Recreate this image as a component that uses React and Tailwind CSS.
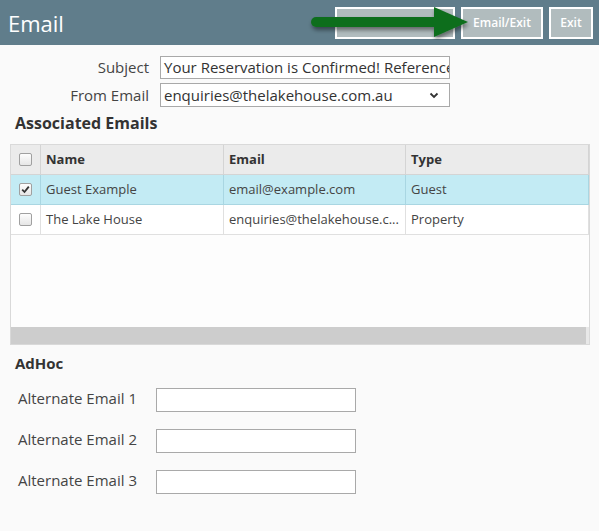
import React from "react";

function Check({ checked }) {
  return (
    <div className="w-[13px] h-[13px] rounded-[2px] border border-[#a0a0a0] bg-[linear-gradient(#fdfdfd,#e6e6e6)] flex items-center justify-center">
      {checked && (
        <svg width="9" height="9" viewBox="0 0 9 9">
          <path d="M1.2 4.6 L3.5 7 L7.8 1.6" fill="none" stroke="#333" strokeWidth="1.8" />
        </svg>
      )}
    </div>
  );
}

export default function App() {
  const font = { fontFamily: '"Open Sans", "DejaVu Sans", sans-serif' };
  return (
    <div className="w-[599px] h-[531px] bg-[#fafafa] overflow-hidden text-[13px] text-[#333]" style={font}>
      <div className="h-[45px] bg-[#607d8b] flex items-center justify-between pl-[8px] pr-[6px] relative">
        <div className="text-white text-[22px] leading-none">Email</div>
        <div className="flex items-center gap-[6px]">
          <div className="w-[120px] h-[32px] border-2 border-white bg-[#b1bcbe] text-white font-semibold text-[12px] flex items-center justify-center">Email/Save</div>
          <div className="w-[82px] h-[32px] border-2 border-white bg-[#b1bcbe] text-white font-semibold text-[12px] flex items-center justify-center">Email/Exit</div>
          <div className="w-[44px] h-[32px] border-2 border-white bg-[#b1bcbe] text-white font-semibold text-[12px] flex items-center justify-center">Exit</div>
        </div>
        <svg className="absolute left-[306px] top-[4px]" width="170" height="36" viewBox="0 0 170 36">
          <defs>
            <filter id="sh" x="-10%" y="-50%" width="120%" height="200%">
              <feDropShadow dx="1" dy="3" stdDeviation="2" floodColor="#000" floodOpacity="0.45" />
            </filter>
          </defs>
          <g filter="url(#sh)">
            <line x1="10" y1="18" x2="130" y2="18" stroke="#0f6e1e" strokeWidth="10" strokeLinecap="round" />
            <polygon points="128,3 162,18 128,33" fill="#0f6e1e" />
          </g>
        </svg>
      </div>

      <div className="pt-[11px] flex flex-col gap-[4px]">
        <div className="flex items-center">
          <div className="w-[149px] text-right text-[15px] text-[#444]">Subject</div>
          <div className="ml-[11px] w-[290px] h-[23px] border border-[#a9a9a9] bg-white px-[3px] text-[15px] leading-[21px] whitespace-nowrap overflow-hidden text-[#333]">Your Reservation is Confirmed! Reference</div>
        </div>
        <div className="flex items-center">
          <div className="w-[149px] text-right text-[15px] text-[#444]">From Email</div>
          <div className="ml-[11px] w-[290px] h-[24px] border border-[#a9a9a9] bg-white pl-[3px] pr-[10px] text-[15px] flex items-center justify-between">
            <span>enquiries@thelakehouse.com.au</span>
            <svg width="10" height="7" viewBox="0 0 10 7"><path d="M1.5 1.5 L5 5 L8.5 1.5" fill="none" stroke="#333" strokeWidth="1.8" /></svg>
          </div>
        </div>
      </div>

      <div className="pl-[15px] pt-[5px] font-bold text-[16px] leading-[22px] text-[#333]">Associated Emails</div>

      <div className="mt-[10px] mx-[10px] w-[580px] h-[201px] border border-[#d9d9d9] bg-[#fdfdfd] flex flex-col">
        <div className="flex h-[30px] bg-[#ebebeb] border-b border-[#d4d4d4] font-bold text-[13px]">
          <div className="w-[30px] flex items-center justify-center border-r border-[#d4d4d4]"><Check /></div>
          <div className="w-[183px] pl-[5px] flex items-center border-r border-[#d4d4d4]">Name</div>
          <div className="w-[182px] pl-[5px] flex items-center border-r border-[#d4d4d4]">Email</div>
          <div className="w-[183px] pl-[5px] flex items-center border-r border-[#d4d4d4]">Type</div>
        </div>
        <div className="flex h-[30px] bg-[#c3ebf4] border-b border-[#a9d6e2] text-[#444]">
          <div className="w-[30px] flex items-center justify-center border-r border-[#a9d6e2]"><Check checked /></div>
          <div className="w-[183px] pl-[5px] flex items-center border-r border-[#a9d6e2]">Guest Example</div>
          <div className="w-[182px] pl-[5px] flex items-center border-r border-[#a9d6e2]">email@example.com</div>
          <div className="w-[183px] pl-[5px] flex items-center border-r border-[#a9d6e2]">Guest</div>
        </div>
        <div className="flex h-[30px] bg-white border-b border-[#e0e0e0] text-[#444]">
          <div className="w-[30px] flex items-center justify-center border-r border-[#e0e0e0]"><Check /></div>
          <div className="w-[183px] pl-[5px] flex items-center border-r border-[#e0e0e0]">The Lake House</div>
          <div className="w-[182px] pl-[5px] flex items-center border-r border-[#e0e0e0] whitespace-nowrap">enquiries@thelakehouse.c...</div>
          <div className="w-[183px] pl-[5px] flex items-center border-r border-[#e0e0e0]">Property</div>
        </div>
        <div className="flex-1" />
        <div className="h-[17px] flex">
          <div className="flex-1 bg-[#cdcdcd]" />
          <div className="w-[3px] bg-[#e8e8e8]" />
        </div>
      </div>

      <div className="pl-[15px] pt-[7px] font-bold text-[15px] leading-[22px]">AdHoc</div>

      <div className="pt-[14px] flex flex-col gap-[17px]">
        {[1, 2, 3].map((n) => (
          <div key={n} className="flex items-center">
            <div className="w-[156px] pl-[18px] text-[15px] text-[#444] -mt-[4px]">Alternate Email {n}</div>
            <div className="w-[200px] h-[24px] border border-[#a9a9a9] bg-white" />
          </div>
        ))}
      </div>
    </div>
  );
}
